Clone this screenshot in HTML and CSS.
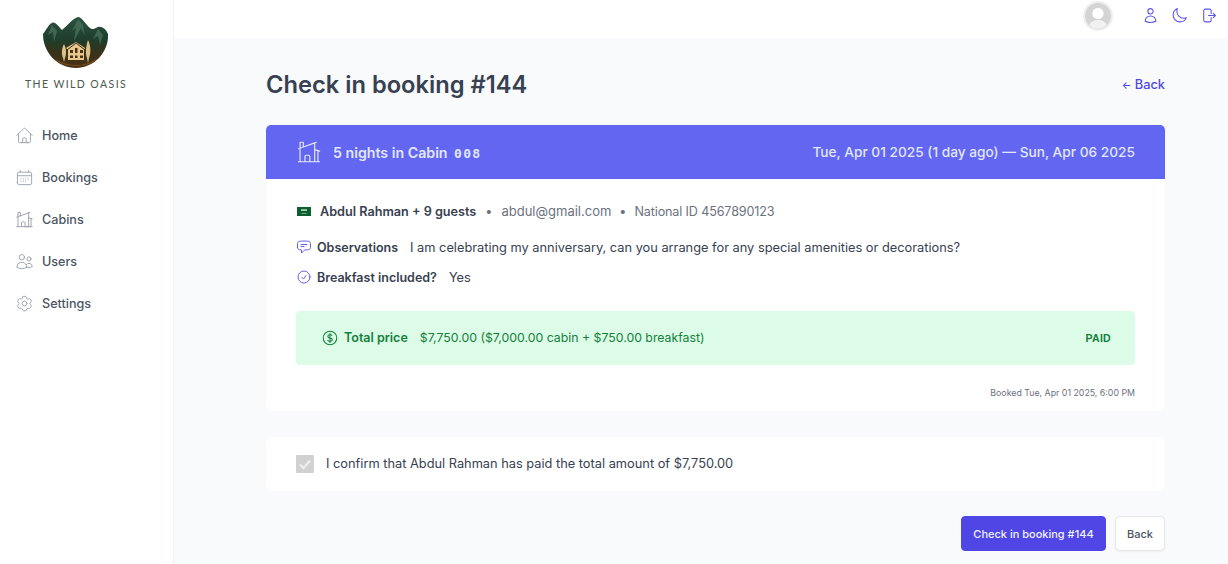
FILE: index.html
```html
<!DOCTYPE html>
<html lang="en">
<head>
<meta charset="utf-8">
<title>The Wild Oasis</title>
<link rel="stylesheet" href="styles.css">
</head>
<body>
<div class="app">
  <aside class="sidebar">
    <div class="logo">
      <svg class="logo-img" viewBox="0 0 66 51" width="66" height="51">
        <defs>
          <linearGradient id="lg" x1="0" y1="0" x2="0" y2="1">
            <stop offset="0" stop-color="#2c5240"/>
            <stop offset=".45" stop-color="#1f3d2c"/>
            <stop offset=".68" stop-color="#35331a"/>
            <stop offset="1" stop-color="#4d3013"/>
          </linearGradient>
        </defs>
        <path d="M0 17 C3 13 6 7 9 6 C12 4 15 9 19 13 C24 9 30 1 35 0 C39 0 43 8 47 11 C49 13 51 12 55 10 C59 9 63 12 65 17 C66 36 50 51 33 51 C15 51 0 36 0 17Z" fill="url(#lg)"/>
        <path d="M35 2 L29 14 L33 11 L31 24 L38 11 L42 19 L40 8Z M9 8 L5 18 L10 15 L11 25 L14 14Z M55 12 L50 22 L55 19 L57 28 L60 18Z" fill="#4a7560" opacity=".7"/>
        <path d="M12 42 Q33 54 54 42 L50 46 Q33 52 16 46Z" fill="#7a5424" opacity=".8"/>
        <path d="M23 31 L33 25 L42 31 L41 33 L41 43 L25 43 L25 33Z" fill="#e8c68e"/>
        <path d="M33 26 L24 33 M33 26 L42 33" stroke="#3b2a12" stroke-width="1" fill="none"/>
        <path d="M27 33h3v3h-3zM32 31h2.500v5H32zM37 33h3v3h-3zM27 38.500h3v2.500h-3zM32 38.500h2.500v2.500H32zM37 38.500h3v2.500h-3z" fill="#4a3315"/>
        <path d="M21 27 C23 31 24 36 22 41 L21 45 L20 41 C18 36 19 31 21 27Z M45 23 C48 29 48 36 46 41 L45 46 L44 41 C42 36 43 29 45 23Z" fill="#dcc088"/>
      </svg>
      <span class="logo-text">THE WILD OASIS</span>
    </div>
    <nav class="nav">
      <a class="nav-link"><svg class="nav-icon" viewBox="0 0 24 24"><path d="M2.250 12 11.200 3.040a1.130 1.130 0 0 1 1.600 0L21.750 12M4.500 9.750V19.900c0 .6.500 1.100 1.100 1.100H9.750v-4.900c0-.6.500-1.100 1.100-1.100h2.300c.6 0 1.100.5 1.100 1.100V21h4.100c.6 0 1.100-.5 1.100-1.100V9.750M8.250 21h8.250"/></svg><span>Home</span></a>
      <a class="nav-link"><svg class="nav-icon" viewBox="0 0 24 24"><path d="M6.750 3v2.250M17.250 3v2.250M3 18.750V7.500a2.250 2.250 0 0 1 2.250-2.250h13.500A2.250 2.250 0 0 1 21 7.500v11.250A2.250 2.250 0 0 1 18.750 21H5.250A2.250 2.250 0 0 1 3 18.750ZM3 9.750h18M7.500 12.750h.01M10.500 12.750h.01M13.500 12.750h.01M16.500 12.750h.01M7.500 15h.01M10.500 15h.01M13.500 15h.01M16.500 15h.01M7.500 17.250h.01M10.500 17.250h.01M13.500 17.250h.01"/></svg><span>Bookings</span></a>
      <a class="nav-link"><svg class="nav-icon" viewBox="0 0 24 24"><path d="M8.250 21v-4.875c0-.621.504-1.125 1.125-1.125h2.250c.621 0 1.125.504 1.125 1.125V21m0 0h4.500V3.545M12.750 21h7.500V10.750M2.250 21h1.500m18 0h-18M2.250 9l4.500-1.636M18.750 3l-1.500.545m0 6.205 3 1m1.500.5-1.500-.5M6.750 7.364V3h-3v18m3-13.636 10.500-3.819"/></svg><span>Cabins</span></a>
      <a class="nav-link"><svg class="nav-icon" viewBox="0 0 24 24"><path d="M15 19.130a9.400 9.400 0 0 0 2.630.37 9.300 9.300 0 0 0 4.120-.95 4.130 4.130 0 0 0-7.530-2.490M15 19.130v-.01c0-1.110-.29-2.160-.78-3.070M15 19.130v.11A12.300 12.300 0 0 1 8.620 21a12.300 12.300 0 0 1-6.370-1.770v-.1a6.380 6.380 0 0 1 11.960-3.080M12 6.380a3.380 3.380 0 1 1-6.750 0 3.380 3.380 0 0 1 6.750 0ZM20.250 8.630a2.630 2.630 0 1 1-5.250 0 2.630 2.630 0 0 1 5.250 0Z"/></svg><span>Users</span></a>
      <a class="nav-link"><svg class="nav-icon" viewBox="0 0 24 24"><path d="M9.590 3.940c.09-.54.560-.94 1.110-.94h2.590c.55 0 1.020.4 1.110.94l.21 1.280c.06.370.31.680.64.870l.33.190c.33.180.72.240 1.080.1l1.210-.45a1.130 1.130 0 0 1 1.370.49l1.300 2.250c.28.480.16 1.090-.27 1.440l-1 .82c-.29.240-.43.610-.42.990v.38c-.01.380.13.750.42.990l1 .82c.43.350.55.960.27 1.440l-1.300 2.250a1.130 1.130 0 0 1-1.370.49l-1.210-.45c-.36-.14-.75-.08-1.080.1l-.33.190c-.33.190-.58.500-.64.870l-.21 1.280c-.09.540-.56.940-1.110.94h-2.590c-.55 0-1.020-.4-1.110-.94l-.21-1.280c-.06-.37-.31-.68-.64-.87l-.33-.19c-.33-.18-.72-.24-1.080-.1l-1.210.45a1.130 1.130 0 0 1-1.370-.49l-1.300-2.250a1.130 1.130 0 0 1 .27-1.440l1-.82c.29-.24.43-.61.42-.99v-.38c.01-.38-.13-.75-.42-.99l-1-.82a1.130 1.130 0 0 1-.27-1.440l1.300-2.250a1.130 1.130 0 0 1 1.370-.49l1.210.45c.36.140.75.080 1.080-.1l.33-.19c.33-.19.58-.5.640-.87l.21-1.280ZM15 12a3 3 0 1 1-6 0 3 3 0 0 1 6 0Z"/></svg><span>Settings</span></a>
    </nav>
  </aside>
  <div class="main-col">
    <header class="topbar">
      <div class="avatar"><svg viewBox="0 0 30 30" width="26" height="26"><circle cx="15" cy="15" r="15" fill="#d4d4d4"/><circle cx="15" cy="12" r="6.500" fill="#fff"/><path d="M5 25c2-4.500 6-5.500 10-5.500s8 1 10 5.500c-2.500 3-6 4.500-10 4.500S7.500 28 5 25Z" fill="#f1f1f1"/></svg></div>
      <div class="top-icons">
        <svg class="top-icon" viewBox="0 0 24 24"><path d="M15.750 6a3.750 3.750 0 1 1-7.500 0 3.750 3.750 0 0 1 7.500 0ZM4.500 20.120a7.500 7.500 0 0 1 15 0A17.900 17.900 0 0 1 12 21.750c-2.680 0-5.220-.58-7.500-1.630Z"/></svg>
        <svg class="top-icon" viewBox="0 0 24 24"><path d="M21.750 15A9.720 9.720 0 0 1 18 15.750 9.750 9.750 0 0 1 8.250 6c0-1.330.27-2.600.75-3.750A9.750 9.750 0 0 0 3 11.250 9.750 9.750 0 0 0 12.750 21a9.750 9.750 0 0 0 9-6Z"/></svg>
        <svg class="top-icon" viewBox="0 0 24 24"><path d="M15.750 9V5.250A2.250 2.250 0 0 0 13.500 3h-6a2.250 2.250 0 0 0-2.250 2.250v13.500A2.250 2.250 0 0 0 7.500 21h6a2.250 2.250 0 0 0 2.250-2.250V15M12 12h9.750m0 0-3-3m3 3-3 3"/></svg>
      </div>
    </header>
    <main class="content">
      <div class="title-row">
        <h1 class="title">Check in booking #144</h1>
        <a class="back-link"><span class="back-arrow">←</span> Back</a>
      </div>
      <section class="card">
        <div class="card-head">
          <div class="head-left">
            <svg class="head-icon" viewBox="0 0 24 24"><path d="M8.250 21v-4.875c0-.621.504-1.125 1.125-1.125h2.250c.621 0 1.125.504 1.125 1.125V21m0 0h4.500V3.545M12.750 21h7.500V10.750M2.250 21h1.500m18 0h-18M2.250 9l4.500-1.636M18.750 3l-1.500.545m0 6.205 3 1m1.500.5-1.500-.5M6.750 7.364V3h-3v18m3-13.636 10.500-3.819"/></svg>
            <span class="head-nights">5 nights in Cabin <span class="mono">008</span></span>
          </div>
          <span class="head-dates">Tue, Apr 01 2025 (1 day ago) — Sun, Apr 06 2025</span>
        </div>
        <div class="card-body">
          <div class="guest">
            <svg class="flag" viewBox="0 0 14 9" width="14" height="9"><rect width="14" height="9" fill="#0b5f30"/><rect x="4" y="2.200" width="6" height="1.800" fill="#a9c9b2"/><rect x="4.500" y="6" width="5" height=".7" fill="#a9c9b2"/></svg>
            <strong class="guest-name">Abdul Rahman + 9 guests</strong>
            <span class="dot">•</span>
            <span class="muted muted-mail">abdul@gmail.com</span>
            <span class="dot dot-last">•</span>
            <span class="muted muted-id">National ID 4567890123</span>
          </div>
          <div class="row">
            <svg class="row-icon" viewBox="0 0 24 24"><path d="M7.500 8.250h9m-9 3H12m-9.750 1.510c0 1.600 1.120 2.990 2.710 3.230 1.090.16 2.190.28 3.290.37V21l4.080-4.080c.28-.28.660-.44 1.060-.45a48 48 0 0 0 5.650-.48c1.590-.24 2.710-1.630 2.710-3.230V6.740c0-1.600-1.120-2.990-2.710-3.230A48.400 48.400 0 0 0 12 3c-2.390 0-4.640.18-6.790.51C3.370 3.750 2.250 5.140 2.250 6.740v6.020Z"/></svg>
            <span class="row-label">Observations</span>
            <span class="row-value">I am celebrating my anniversary, can you arrange for any special amenities or decorations?</span>
          </div>
          <div class="row row-second">
            <svg class="row-icon" viewBox="0 0 24 24"><path d="m9 12.750 2.250 2.250L15 9.750M21 12a9 9 0 1 1-18 0 9 9 0 0 1 18 0Z"/></svg>
            <span class="row-label">Breakfast included?</span>
            <span class="row-value">Yes</span>
          </div>
          <div class="price">
            <div class="price-left">
              <svg class="price-icon" viewBox="0 0 24 24"><path d="M12 6v12m-3-2.820.88.660c1.170.880 3.070.880 4.240 0 1.170-.880 1.170-2.300 0-3.180-.58-.44-1.350-.66-2.120-.66-.72 0-1.450-.22-2-.66-1.110-.88-1.110-2.300 0-3.180 1.110-.88 2.890-.88 4 0l.41.330M21 12a9 9 0 1 1-18 0 9 9 0 0 1 18 0Z"/></svg>
              <span class="price-label">Total price</span>
              <span class="price-value">$7,750.00 ($7,000.00 cabin + $750.00 breakfast)</span>
            </div>
            <span class="paid">PAID</span>
          </div>
          <div class="booked">Booked Tue, Apr 01 2025, 6:00 PM</div>
        </div>
      </section>
      <section class="confirm">
        <span class="checkbox"><svg viewBox="0 0 18 18" width="18" height="18"><path d="M4 9.500 7.500 13 14 5.500" fill="none" stroke="#eee" stroke-width="2.400"/></svg></span>
        <span class="confirm-text">I confirm that Abdul Rahman has paid the total amount of $7,750.00</span>
      </section>
      <div class="actions">
        <button class="btn btn-primary">Check in booking #144</button>
        <button class="btn btn-secondary">Back</button>
      </div>
    </main>
  </div>
</div>
</body>
</html>
```
FILE: styles.css
```css
* { box-sizing: border-box; margin: 0; padding: 0; }
html, body { height: 100%; overflow: hidden; }
body { font-family: Inter, "Noto Sans", sans-serif; color: #374151; background: #f9fafb; }
svg { flex: none; display: block; }
.app { display: flex; height: 564px; }
.sidebar { width: 174px; flex: none; background: #fff; border-right: 1px solid #f3f4f6; padding-top: 17px; }
.logo { display: flex; flex-direction: column; align-items: center; padding-right: 21px; }
.logo-text { margin-top: 8px; font-family: Lato, sans-serif; font-size: 10.500px; letter-spacing: 1.420px; color: #4a5a4c; line-height: 16px; white-space: nowrap; }
.nav { margin-top: 27px; display: flex; flex-direction: column; gap: 10px; }
.nav-link { display: flex; align-items: center; gap: 8px; height: 32px; padding-left: 15px; font-size: 12.600px; font-weight: 500; color: #4b5563; }
.nav-icon { width: 19px; height: 19px; fill: none; stroke: #9ca3af; stroke-width: 1.200; stroke-linecap: round; stroke-linejoin: round; }
.main-col { flex: 1; min-width: 0; display: flex; flex-direction: column; }
.topbar { height: 38px; flex: none; background: #fff; display: flex; align-items: flex-start; justify-content: flex-end; padding-right: 11px; }
.avatar { width: 30px; height: 30px; border-radius: 50%; border: 2px solid #eee; margin-right: 29px; margin-top: 1px; display: flex; align-items: center; justify-content: center; }
.top-icons { display: flex; gap: 12px; margin-top: 7px; }
.top-icon { width: 17px; height: 17px; fill: none; stroke: #5b54ea; stroke-width: 1.500; stroke-linecap: round; stroke-linejoin: round; }
.content { flex: 1; padding: 0 63px 0 92px; display: flex; flex-direction: column; }
.title-row { height: 87px; display: flex; align-items: center; justify-content: space-between; padding-top: 5px; }
.title { font-size: 23.700px; font-weight: 600; color: #374151; }
.back-link { font-size: 12.800px; font-weight: 500; color: #4f46e5; }
.back-arrow { font-size: 10px; }
.card { background: #fff; border-radius: 5px; box-shadow: 0 0 2px #eef0f3; overflow: hidden; height: 286px; }
.card-head { height: 54px; background: #6366f1; padding: 0 30px; display: flex; align-items: center; justify-content: space-between; color: #e0e7ff; }
.head-left { display: flex; align-items: center; gap: 11px; }
.head-icon { width: 26px; height: 26px; fill: none; stroke: #e0e7ff; stroke-width: 1.100; stroke-linecap: round; stroke-linejoin: round; }
.head-nights { font-size: 14.200px; font-weight: 600; }
.mono { font-family: "DejaVu Sans Mono", monospace; font-size: 13px; font-weight: 600; letter-spacing: 1.200px; margin-left: 3px; }
.head-dates { font-size: 13.700px; font-weight: 500; }
.card-body { padding: 24px 30px 0; }
.guest { display: flex; align-items: center; height: 16px; font-size: 12.650px; }
.flag { margin-left: 1px; margin-right: 9px; }
.guest-name { font-weight: 600; color: #374151; }
.dot { margin: 0 9px; color: #6b7280; }
.dot-last { margin-right: 8px; margin-left: 8px; }
.muted { color: #6b7280; }
.muted-mail { font-size: 13px; }
.muted-id { font-size: 12.600px; letter-spacing: -.14px; }
.row { display: flex; align-items: center; height: 16px; margin-top: 20px; font-size: 12.800px; }
.row-second { margin-top: 14px; }
.row-icon { width: 16px; height: 16px; margin-right: 5px; fill: none; stroke: #5b54ea; stroke-width: 1.400; stroke-linecap: round; stroke-linejoin: round; }
.row-label { font-weight: 600; font-size: 12.500px; margin-right: 12px; }
.row-value { color: #374151; }
.price { margin-top: 26px; height: 54px; background: #dcfce7; color: #15803d; border-radius: 4px; padding: 0 24px 0 25px; display: flex; align-items: center; justify-content: space-between; }
.price-left { display: flex; align-items: center; margin-top: -1px; }
.price-icon { width: 18px; height: 18px; margin-right: 5px; fill: none; stroke: #15803d; stroke-width: 1.400; stroke-linecap: round; stroke-linejoin: round; }
.price-label { font-size: 12.500px; font-weight: 600; margin-right: 12px; }
.price-value { font-size: 12.300px; }
.paid { font-family: "Liberation Sans", sans-serif; font-size: 10.500px; font-weight: 700; letter-spacing: .3px; }
.booked { margin-top: 22px; text-align: right; font-size: 8.800px; color: #6b7280; }
.confirm { margin-top: 26px; height: 54px; background: #fff; border-radius: 5px; box-shadow: 0 0 2px #eef0f3; padding: 0 30px; display: flex; align-items: center; gap: 12px; }
.checkbox { width: 18px; height: 18px; background: #d1d1d1; border-radius: 1px; flex: none; }
.confirm-text { font-size: 12.800px; color: #374151; margin-top: -2px; }
.actions { margin-top: 25px; display: flex; justify-content: flex-end; gap: 9px; }
.btn { font-family: inherit; font-size: 11px; font-weight: 500; height: 35px; border-radius: 4px; }
.btn-primary { width: 145px; background: #4f46e5; color: #eef2ff; border: 1px solid #4f46e5; }
.btn-secondary { width: 50px; background: #fff; color: #4b5563; border: 1px solid #e5e7eb; box-shadow: 0 1px 2px #f0f1f3; }
```
